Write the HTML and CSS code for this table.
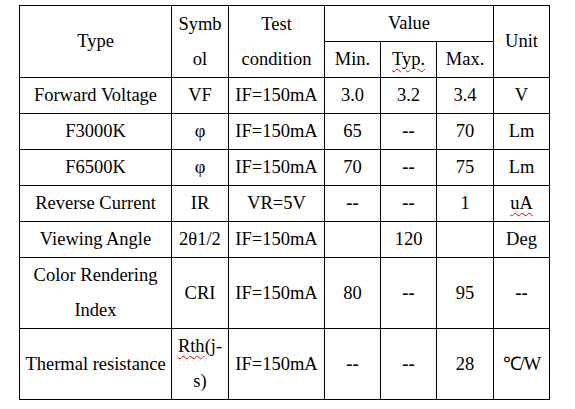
FILE: index.html
```html
<!DOCTYPE html>
<html>
<head>
<meta charset="utf-8">
<link rel="stylesheet" href="styles.css">
</head>
<body>
<table class="spec">
  <colgroup>
    <col class="c-type"><col class="c-sym"><col class="c-test"><col class="c-val"><col class="c-val"><col class="c-val2"><col class="c-val">
  </colgroup>
  <tr>
    <td rowspan="2">Type</td>
    <td rowspan="2">Symb<br>ol</td>
    <td rowspan="2">Test<br>condition</td>
    <td colspan="3">Value</td>
    <td rowspan="2">Unit</td>
  </tr>
  <tr>
    <td>Min.</td>
    <td><span class="spell">Typ.</span></td>
    <td>Max.</td>
  </tr>
  <tr><td>Forward Voltage</td><td>VF</td><td>IF=150mA</td><td>3.0</td><td>3.2</td><td>3.4</td><td>V</td></tr>
  <tr><td>F3000K</td><td>φ</td><td>IF=150mA</td><td>65</td><td class="dash">--</td><td>70</td><td>Lm</td></tr>
  <tr><td>F6500K</td><td>φ</td><td>IF=150mA</td><td>70</td><td class="dash">--</td><td>75</td><td>Lm</td></tr>
  <tr><td>Reverse Current</td><td>IR</td><td>VR=5V</td><td class="dash">--</td><td class="dash">--</td><td>1</td><td><span class="spell">uA</span></td></tr>
  <tr><td>Viewing Angle</td><td>2θ1/2</td><td>IF=150mA</td><td></td><td>120</td><td></td><td>Deg</td></tr>
  <tr><td>Color Rendering<br>Index</td><td>CRI</td><td>IF=150mA</td><td>80</td><td class="dash">--</td><td>95</td><td class="dash">--</td></tr>
  <tr><td>Thermal resistance</td><td><span class="spell">Rth</span>(j-<br>s)</td><td>IF=150mA</td><td class="dash">--</td><td class="dash">--</td><td>28</td><td class="unit">℃/W</td></tr>
</table>
</body>
</html>
```
FILE: styles.css
```css
html, body {
  margin: 0;
  background: #fff;
}
body {
  padding: 5px 0 0 19px;
}
.spec {
  border-collapse: collapse;
  table-layout: fixed;
  width: 531px;
  font-family: "Liberation Serif", "Times New Roman", serif;
  font-size: 18.5px;
  color: #000;
}
.c-type { width: 152px; }
.c-sym { width: 57px; }
.c-test { width: 96px; }
.c-val { width: 56px; }
.c-val2 { width: 57px; }
.spec td {
  border: 1px solid #000;
  padding: 0;
  line-height: 35px;
  text-align: center;
  vertical-align: middle;
  white-space: nowrap;
}
.spec td.dash {
  font-weight: bold;
}
.spell {
  text-decoration: underline wavy #e00000;
  text-decoration-thickness: 1px;
  text-underline-offset: 3px;
}
.unit {
  letter-spacing: -1px;
}
```
